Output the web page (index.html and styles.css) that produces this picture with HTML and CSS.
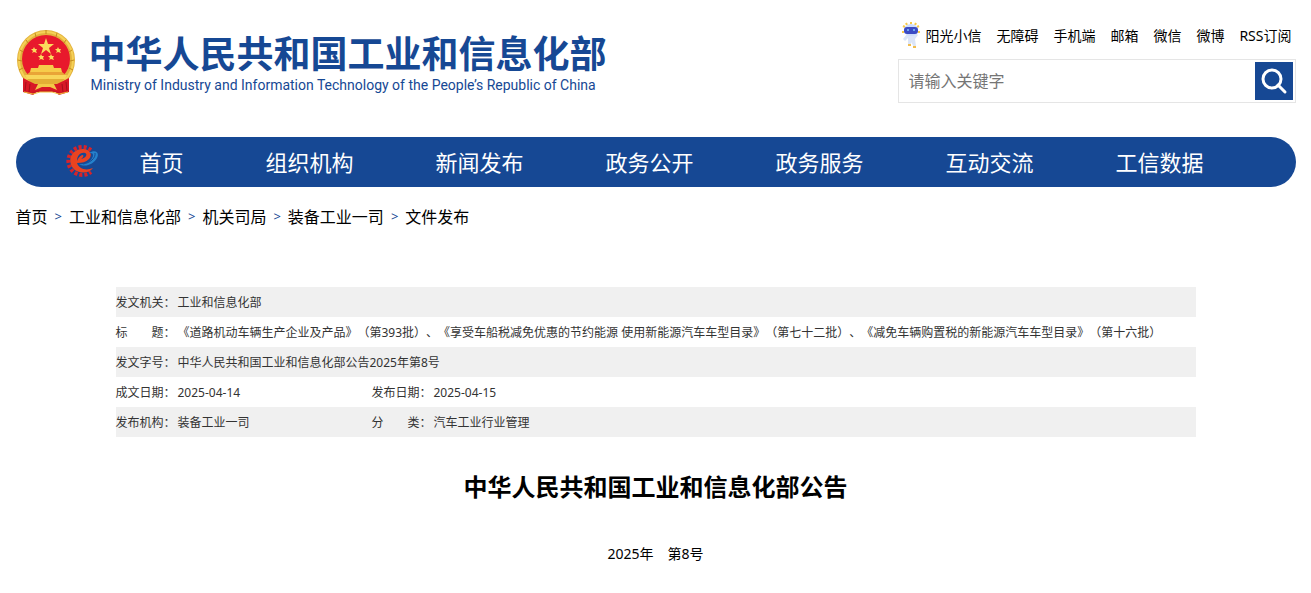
FILE: index.html
```html
<!DOCTYPE html>
<html lang="zh-CN">
<head>
    <meta charset="UTF-8">
    <meta name="viewport" content="width=device-width, initial-scale=1.0">
    <title>中华人民共和国工业和信息化部公告</title>
    <link rel="stylesheet" href="styles.css">
</head>
<body>
    <div class="container">
        <header class="header">
            <a class="logo" href="#">
                <svg class="emblem" viewBox="0 0 60 66" aria-hidden="true">
                    <path d="M8 48L7 62L17 65L21 62H39L43 65L53 62L52 48Z" fill="#c81623"/>
                    <ellipse cx="30" cy="30" rx="29" ry="30" fill="#e3b23c"/>
                    <ellipse cx="30" cy="30" rx="27" ry="28" fill="none" stroke="#f5d057" stroke-width="2"/>
                    <path d="M4 20L7 22M2 30L6 31M3 40L7 38M10 10L12 13M19 3L20 7M30 0V4M41 3L40 7M50 10L48 13M56 20L53 22M58 30L54 31M57 40L53 38" stroke="#c48a1e"/>
                    <circle cx="30" cy="29" r="24" fill="#e8192c"/>
                    <path d="M30 8L32 14H38L33 18L35 24L30 20L25 24L27 18L22 14H28Z" fill="#fbdc5c"/>
                    <path d="M18 17L19 19H21L20 21L21 23L18 22L16 23L17 21L15 19H17Z" fill="#fbdc5c"/>
                    <path d="M42 17L43 19H45L44 21L45 23L42 22L40 23L41 21L39 19H41Z" fill="#fbdc5c"/>
                    <path d="M25 24L26 26H28L27 28L28 30L25 29L23 30L24 28L22 26H24Z" fill="#fbdc5c"/>
                    <path d="M35 24L36 26H38L37 28L38 30L35 29L33 30L34 28L32 26H34Z" fill="#fbdc5c"/>
                    <path d="M23 35H37L38 38H45L46 42H14L15 38H22Z" fill="#f6cc4a"/>
                    <path d="M14 42H46L51 46H9Z" fill="#e9a537"/>
                    <path d="M9 45H51L49 49H11Z" fill="#f8d65a"/>
                    <path d="M11 49H49L43 54H17Z" fill="#e3ae35"/>
                    <path d="M7 48L19 54L16 64L7 61ZM53 48L41 54L44 64L53 61Z" fill="#d81726"/>
                    <path d="M10 52L9 61M14 54L13 62M50 52L51 61M46 54L47 62" stroke="#a50e1b"/>
                    <path d="M18 54H42L43 62L36 60H24L17 62Z" fill="#d81726"/>
                    <path d="M22 54H38L41 60L34 57H26L19 60Z" fill="#f3c846"/>
                    <path d="M8 62L17 64L24 62H36L43 64L52 62" fill="none" stroke="#efbd3a"/>
                </svg>
                <span class="logo-text">
                    <span class="logo-cn">中华人民共和国工业和信息化部</span>
                    <span class="logo-en">Ministry of Industry and Information Technology of the People’s Republic of China</span>
                </span>
            </a>

            <div class="tools">
                <div class="top-links">
                    <a class="robot-link" href="#">
                        <svg class="robot" viewBox="0 0 18 26" aria-hidden="true">
                            <path d="M3 5L1 4M5 3L4 1M9 2V0M13 3L14 1M15 5L17 4M2 10H0M16 10H18" stroke="#f7c948" stroke-width="2"/>
                            <path d="M5 12L1 17L3 19L6 16L6 23L9 24L9 20L12 25L14 24L13 17L16 13L14 11Z" fill="#dbe5f8"/>
                            <ellipse cx="9" cy="8" rx="7" ry="6" fill="#cddcfa"/>
                            <rect x="2" y="5" width="14" height="7" rx="3" fill="#3b4bc4"/>
                            <circle cx="6" cy="8" r="1" fill="#7fc4ff"/>
                            <circle cx="12" cy="8" r="1" fill="#7fc4ff"/>
                            <path d="M6 23H9M11 25H14" stroke="#f0bd50" stroke-width="2"/>
                        </svg>阳光小信</a>
                    <a href="#">无障碍</a>
                    <a href="#">手机端</a>
                    <a href="#">邮箱</a>
                    <a href="#">微信</a>
                    <a href="#">微博</a>
                    <a href="#">RSS订阅</a>
                </div>
                <form class="search">
                    <input type="text" class="search-input" placeholder="请输入关键字" aria-label="请输入关键字">
                    <button type="button" class="search-btn" aria-label="搜索">
                        <svg viewBox="0 0 38 38" aria-hidden="true">
                            <circle cx="17" cy="17" r="9" fill="none" stroke="#fff" stroke-width="3"/>
                            <path d="M23 23L30 30" stroke="#fff" stroke-width="3" stroke-linecap="round"/>
                        </svg>
                    </button>
                </form>
            </div>
        </header>

        <nav class="nav">
            <svg class="nav-icon" viewBox="0 0 32 32" aria-hidden="true">
                <path d="M25 5A14 14 0 1 0 25 27" fill="none" stroke="#d8232a" stroke-width="4" stroke-dasharray="3 2"/>
                <path d="M27 23C22 30 9 29 5 20C2 11 8 4 17 4C24 4 27 10 23 14C20 17 16 18 11 18C13 24 20 26 27 23Z" fill="#ea4320"/>
                <path d="M11 16C11 10 15 7 19 8C22 9 20 13 15 14C18 12 18 10 16 10C14 11 12 13 11 16Z" fill="#164894"/>
                <path d="M13 19C20 20 27 15 27 10C27 8 25 8 23 8C29 4 34 7 31 13C28 19 19 23 13 19Z" fill="#2582cc"/>
                <path d="M17 19C24 18 30 13 29 8" fill="none" stroke="#164894"/>
            </svg>
            <a href="#">首页</a>
            <a href="#">组织机构</a>
            <a href="#">新闻发布</a>
            <a href="#">政务公开</a>
            <a href="#">政务服务</a>
            <a href="#">互动交流</a>
            <a href="#">工信数据</a>
        </nav>

        <div class="crumbs">
            <a href="#">首页</a>
            <span>&gt;</span>
            <a href="#">工业和信息化部</a>
            <span>&gt;</span>
            <a href="#">机关司局</a>
            <span>&gt;</span>
            <a href="#">装备工业一司</a>
            <span>&gt;</span>
            <a href="#">文件发布</a>
        </div>

        <main class="article">
            <table class="info">
                <colgroup>
                    <col class="col-label">
                    <col class="col-short">
                    <col class="col-label">
                    <col>
                </colgroup>
                <tr>
                    <th>发文机关：</th>
                    <td colspan="3">工业和信息化部</td>
                </tr>
                <tr>
                    <th>标　　题：</th>
                    <td colspan="3">《道路机动车辆生产企业及产品》（第393批）、《享受车船税减免优惠的节约能源 使用新能源汽车车型目录》（第七十二批）、《减免车辆购置税的新能源汽车车型目录》（第十六批）</td>
                </tr>
                <tr>
                    <th>发文字号：</th>
                    <td colspan="3">中华人民共和国工业和信息化部公告2025年第8号</td>
                </tr>
                <tr>
                    <th>成文日期：</th>
                    <td>2025-04-14</td>
                    <th>发布日期：</th>
                    <td>2025-04-15</td>
                </tr>
                <tr>
                    <th>发布机构：</th>
                    <td>装备工业一司</td>
                    <th>分　　类：</th>
                    <td>汽车工业行业管理</td>
                </tr>
            </table>

            <h1>中华人民共和国工业和信息化部公告</h1>
            <p class="number">2025年　第8号</p>
        </main>
    </div>
</body>
</html>
```
FILE: styles.css
```css
* {
    box-sizing: border-box;
}

body {
    margin: 0;
    font-family: "Noto Sans", "Noto Sans CJK SC", sans-serif;
    font-size: 14px;
    color: #000;
    background-color: #fff;
    text-spacing-trim: space-all;
}

a {
    color: inherit;
    text-decoration: none;
}

.container {
    max-width: 1280px;
    margin: 0 auto;
}

.header {
    display: flex;
    justify-content: space-between;
    height: 137px;
    padding-top: 20px;
}

.logo {
    display: flex;
    align-items: flex-start;
    gap: 13px;
    padding-top: 10px;
    color: #164894;
}

.emblem {
    width: 60px;
    height: 66px;
}

.logo-text {
    display: flex;
    flex-direction: column;
    white-space: nowrap;
}

.logo-cn {
    font-size: 37px;
    font-weight: bold;
    line-height: 48px;
}

.logo-en {
    padding-left: 2px;
    font-family: Roboto, sans-serif;
    font-size: 14px;
    line-height: 14px;
}

.tools {
    width: 398px;
}

.top-links {
    display: flex;
    align-items: center;
    justify-content: flex-end;
    gap: 15px;
    height: 30px;
    padding-right: 4px;
    white-space: nowrap;
}

.robot-link {
    display: flex;
    align-items: center;
    gap: 5px;
}

.robot {
    width: 18px;
    height: 26px;
}

.search {
    display: flex;
    height: 44px;
    margin-top: 9px;
    padding: 2px;
    border: 1px solid #e5e5e5;
}

.search-input {
    flex: 1;
    min-width: 0;
    padding: 0 8px;
    border: 0;
    outline: none;
    font-family: inherit;
    font-size: 16px;
}

.search-input::placeholder {
    color: #757575;
}

.search-btn {
    width: 38px;
    height: 38px;
    padding: 0;
    border: 0;
    background-color: #164894;
    cursor: pointer;
}

.search-btn svg {
    display: block;
}

.nav {
    display: flex;
    align-items: center;
    height: 50px;
    padding: 0 0 2px 50px;
    border-radius: 25px;
    background-color: #164894;
    color: #fff;
    font-size: 22px;
    white-space: nowrap;
}

.nav a {
    padding: 0 41px;
}

.nav-icon {
    width: 32px;
    height: 32px;
    margin-right: 1px;
    flex-shrink: 0;
}

.crumbs {
    display: flex;
    align-items: center;
    gap: 7px;
    height: 58px;
    font-size: 16px;
}

.crumbs span {
    color: #164894;
    font-size: 13px;
}

.article {
    padding: 42px 100px;
}

.info {
    width: 100%;
    border-collapse: collapse;
    table-layout: fixed;
    font-size: 12px;
    color: #333;
}

.info tr {
    height: 30px;
}

.info tr:nth-child(odd) {
    background-color: #f0f0f0;
}

.info th,
.info td {
    padding: 0;
    font-weight: normal;
    text-align: left;
    white-space: nowrap;
}

.col-label {
    width: 62px;
}

.col-short {
    width: 194px;
}

h1 {
    margin: 32px 0 0;
    font-size: 24px;
    line-height: 36px;
    text-align: center;
}

.number {
    margin: 38px 0 0;
    line-height: 22px;
    text-align: center;
}
```
